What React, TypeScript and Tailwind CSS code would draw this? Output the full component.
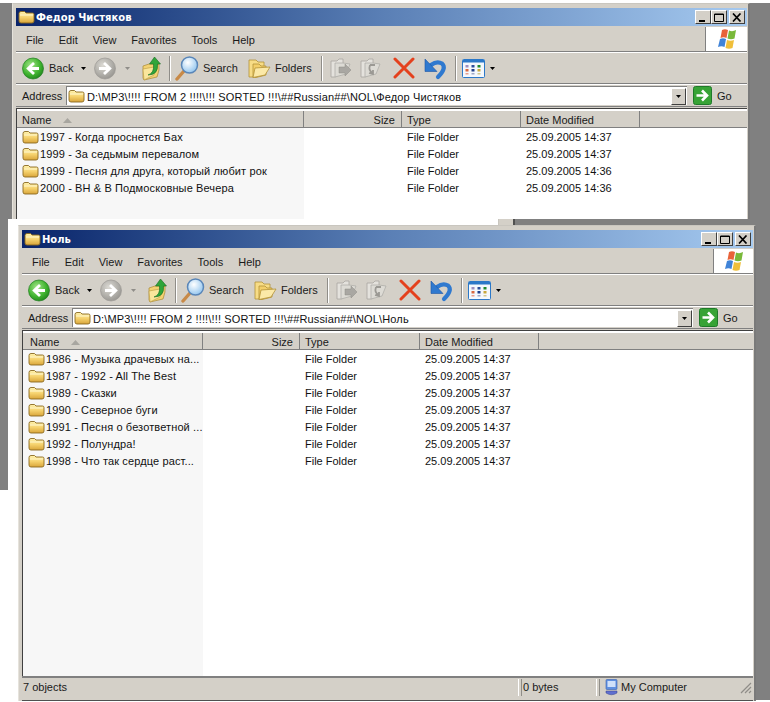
import React from "react";

const Folder = () => (
  <svg width="17" height="14" viewBox="0 0 17 14" className="shrink-0">
    <defs>
      <linearGradient id="fg" x1="0" y1="0" x2="0" y2="1">
        <stop offset="0" stopColor="#fff3b0" />
        <stop offset="0.5" stopColor="#f6d36f" />
        <stop offset="1" stopColor="#d9a53a" />
      </linearGradient>
    </defs>
    <path d="M1 3.5 Q1 1.5 3 1.5 H6.5 L8 3 H14.5 Q16 3 16 4.5 V11 Q16 13 14 13 H3 Q1 13 1 11 Z" fill="url(#fg)" stroke="#8a6a20" strokeWidth="0.9" />
    <path d="M2 5 H15" stroke="#fff8d0" strokeWidth="1" />
  </svg>
);

const Nav = ({ dir, on }: { dir: "l" | "r"; on: boolean }) => (
  <svg width="22" height="23" viewBox="0 0 22 23" className="shrink-0">
    <defs>
      <radialGradient id="navg" cx="0.4" cy="0.35" r="0.75">
        <stop offset="0" stopColor="#a4e58a" />
        <stop offset="0.6" stopColor="#3fb32e" />
        <stop offset="1" stopColor="#1b7a1a" />
      </radialGradient>
      <radialGradient id="navs" cx="0.4" cy="0.35" r="0.75">
        <stop offset="0" stopColor="#dcdad4" />
        <stop offset="1" stopColor="#918f8a" />
      </radialGradient>
    </defs>
    <circle cx="11" cy="11.5" r="10.5" fill={on ? "url(#navg)" : "url(#navs)"} stroke={on ? "#1d7d1d" : "#9c9a95"} strokeWidth="0.7" />
    <path
      d={dir === "l" ? "M17 11.5 H7 M12 6 L6.2 11.5 L12 17" : "M5 11.5 H15 M10 6 L15.8 11.5 L10 17"}
      fill="none"
      stroke="#fff"
      strokeWidth="2.8"
    />
  </svg>
);

const Caret = ({ c = "#000" }: { c?: string }) => (
  <svg width="5" height="3" viewBox="0 0 5 3" className="shrink-0">
    <path d="M0 0 H5 L2.5 3 Z" fill={c} />
  </svg>
);

const Up = () => (
  <svg width="19" height="25" viewBox="0 0 19 25" className="shrink-0">
    <path d="M1 10 L7 8 H17 V14 L15 21 L2 24 L1 22 Z" fill="#f3d272" stroke="#a98a35" strokeWidth="0.7" />
    <path d="M1 13 L12 11 V19 L2 24 Z" fill="#fae69c" stroke="#b8983f" strokeWidth="0.6" />
    <path d="M6 19 Q12.5 17 11.5 8 H7.5 L12.5 1 L18.5 8 H15.5 Q16.5 19 6 19 Z" fill="#2fa53a" stroke="#166b22" strokeWidth="0.6" />
  </svg>
);

const Search = () => (
  <svg width="24" height="25" viewBox="0 0 24 25" className="shrink-0">
    <defs>
      <radialGradient id="lens" cx="0.4" cy="0.35" r="0.7">
        <stop offset="0" stopColor="#ffffff" />
        <stop offset="1" stopColor="#8ec3ee" />
      </radialGradient>
    </defs>
    <path d="M2 23 L9 15" stroke="#c88a48" strokeWidth="3.4" strokeLinecap="round" />
    <circle cx="14.5" cy="9" r="8" fill="url(#lens)" stroke="#5a86b8" strokeWidth="1.5" />
  </svg>
);

const Folders = () => (
  <svg width="23" height="20" viewBox="0 0 23 20" className="shrink-0">
    <path d="M1 2 H8 L10 4 H16 V16 L6 19 H1 Z" fill="#f7dc86" stroke="#b39237" strokeWidth="0.8" />
    <path d="M5 6 H11 L13 8 H18 V17 L8 19.5 H5 Z" fill="#f3cf6a" stroke="#b39237" strokeWidth="0.8" />
    <path d="M7 10 L22 9 L17 17 L5 19.5 Z" fill="#fbe9a8" stroke="#b39237" strokeWidth="0.8" />
  </svg>
);

const GrayMove = ({ copy }: { copy?: boolean }) => (
  <svg width="22" height="21" viewBox="0 0 22 21" className="shrink-0">
    <path d="M1 3 H7 L9 1 H13 V15 L5 19 H1 Z" fill="#e4e2dd" stroke="#a8a6a1" strokeWidth="0.8" />
    <path d="M5 5 H13 L20 6 L16 16 L5 19 Z" fill="#dddbd5" stroke="#b0aea9" strokeWidth="0.8" />
    {copy ? (
      <path d="M10 7 H15 M10 7 Q8 13 13 15 M13 12 L13 16 L9 15" fill="none" stroke="#9b9994" strokeWidth="1.8" />
    ) : (
      <path d="M9 9 H15 V6 L21 12 L15 18 V15 H9 Z" fill="#a9a7a2" stroke="#8e8c87" strokeWidth="0.5" />
    )}
  </svg>
);

const Cross = () => (
  <svg width="22" height="22" viewBox="0 0 22 22" className="shrink-0">
    <path d="M2 2 L20 20 M20 2 L2 20" stroke="#e4411d" strokeWidth="3" strokeLinecap="round" />
  </svg>
);

const Undo = () => (
  <svg width="24" height="23" viewBox="0 0 24 23" className="shrink-0">
    <path d="M7 8 Q13 3.5 18 6.5 Q23 11 14 20" fill="none" stroke="#2f79cf" strokeWidth="4.2" strokeLinecap="round" />
    <path d="M1 2 L13 14.5 H1 Z" fill="#2f79cf" stroke="#1c55a4" strokeWidth="0.6" />
  </svg>
);

const Views = () => (
  <svg width="23" height="19" viewBox="0 0 23 19" className="shrink-0">
    <rect x="0.5" y="0.5" width="22" height="18" rx="1" fill="#f4f8fd" stroke="#2b78c8" />
    <rect x="1" y="1" width="21" height="2.5" fill="#2b78c8" />
    <rect x="3.5" y="6" width="3" height="2.5" fill="#9b8ec0" />
    <rect x="9.5" y="6" width="3" height="2.5" fill="#2b4f9b" />
    <rect x="15.5" y="6" width="3" height="2.5" fill="#1f8a2e" />
    <rect x="3.5" y="10" width="3" height="2.5" fill="#d9683f" />
    <rect x="9.5" y="10" width="3" height="2.5" fill="#1f3f8b" />
    <rect x="15.5" y="10" width="3" height="2.5" fill="#c8a83c" />
    <rect x="3.5" y="14" width="3" height="1.5" fill="#e8a090" />
    <rect x="9.5" y="14" width="3" height="1.5" fill="#a0a8c8" />
    <rect x="15.5" y="14" width="3" height="1.5" fill="#d0c890" />
  </svg>
);

const Flag = () => (
  <svg width="20" height="22" viewBox="0 0 20 22" className="shrink-0">
    <path d="M5 2 Q8 0.5 11 2 L9.5 10 Q6.5 8.5 3.5 10 Z" fill="#e8633a" />
    <path d="M12 2.5 Q15.5 4 19 2 L17.5 10.5 Q14 12 10.5 10.5 Z" fill="#79b93a" />
    <path d="M3 11 Q6 9.5 9 11 L7.5 19 Q4.5 17.5 1 19 Z" fill="#3f83d8" />
    <path d="M10 12 Q13.5 13.5 17 12 L15.5 20 Q12 21.5 8.5 20 Z" fill="#f0bf3a" />
  </svg>
);

const Go = () => (
  <svg width="19" height="19" viewBox="0 0 19 19" className="shrink-0">
    <rect x="0.5" y="0.5" width="18" height="18" rx="2" fill="#37a336" stroke="#1f7a2a" />
    <path d="M3.5 9.5 H13 M9 4.5 L14 9.5 L9 14.5" fill="none" stroke="#fff" strokeWidth="2.6" />
  </svg>
);

const Computer = () => (
  <svg width="13" height="17" viewBox="0 0 13 17" className="shrink-0">
    <rect x="1" y="0.5" width="11" height="10" rx="1" fill="#5f8fe0" stroke="#3860b0" strokeWidth="0.6" />
    <rect x="2.5" y="2" width="8" height="6" fill="#cfe0fa" />
    <path d="M1 12 H12 V14 Q6.5 17.5 1 14 Z" fill="#5f6fd0" stroke="#34408f" strokeWidth="0.5" />
  </svg>
);

const WinBtn = ({ kind }: { kind: "min" | "max" | "x" }) => (
  <div className="flex h-[14px] w-[16px] items-center justify-center border-t border-l border-r border-b border-t-white border-l-white border-r-[#404040] border-b-[#404040] bg-[#d4d0c8]">
    <svg width="10" height="9" viewBox="0 0 10 9">
      {kind === "min" && <rect x="1" y="7" width="6" height="2" fill="#000" />}
      {kind === "max" && <path d="M0.5 1 H9.5 V8.5 H0.5 Z M0.5 1.5 H9.5" fill="none" stroke="#000" strokeWidth="1" />}
      {kind === "x" && <path d="M1 0.5 L8.5 8.5 M8.5 0.5 L1 8.5" stroke="#000" strokeWidth="1.7" />}
    </svg>
  </div>
);

type Row = [string, string];
type WinProps = {
  title: string;
  path: string;
  rows: Row[];
  nameW: number;
  sizeW: number;
  typeW: number;
  dateW: number;
  nameInset: string;
  logoW: string;
  status?: boolean;
  pos: string;
};

const Sep = ({ ml }: { ml: string }) => (
  <div className={`h-[25px] w-[2px] shrink-0 border-l border-r border-l-[#8f8d88] border-r-white ${ml}`} />
);

function Win({ title, path, rows, nameW, sizeW, typeW, dateW, nameInset, logoW, status, pos }: WinProps) {
  const headCell = "flex h-full shrink-0 items-center border-r border-r-[#808080] pt-[2px]";
  return (
    <div className={`absolute flex w-[738px] flex-col overflow-hidden border-t border-l border-r-2 border-t-[#c9c6bf] border-l-[#e6e3dc] border-r-[#7a7a7a] bg-[#d4d0c8] pt-[4px] pr-[1px] pl-[3px] ${pos}`}>
      <div className="flex h-[18px] shrink-0 items-center bg-gradient-to-r from-[#0a246a] via-[#5a7fb5] to-[#a6caf0] pr-[2px]">
        <div className="ml-[2px] mr-[1px] flex"><Folder /></div>
        <span className="pt-[2px] font-['DejaVu_Sans'] text-[10px] font-bold text-white">{title}</span>
        <div className="ml-auto flex items-center">
          <WinBtn kind="min" />
          <WinBtn kind="max" />
          <div className="ml-[2px]"><WinBtn kind="x" /></div>
        </div>
      </div>

      <div className="mt-[1px] flex h-[25px] shrink-0 items-stretch border-b border-b-[#808080]">
        <div className="flex flex-1 items-center gap-[15px] pt-[2px] pl-[10px]">
          <span>File</span>
          <span>Edit</span>
          <span>View</span>
          <span>Favorites</span>
          <span>Tools</span>
          <span>Help</span>
        </div>
        <div className={`flex items-center justify-center border-l border-l-[#808080] bg-white ${logoW}`}>
          <Flag />
        </div>
      </div>

      <div className="flex h-[32px] shrink-0 items-center border-t border-b border-t-white border-b-[#808080] pl-[6px]">
        <Nav dir="l" on />
        <span className="ml-[5px] w-[22px] whitespace-nowrap">Back</span>
        <div className="ml-[10px]"><Caret /></div>
        <div className="ml-[8px]"><Nav dir="r" on={false} /></div>
        <div className="ml-[9px]"><Caret c="#8f8d88" /></div>
        <div className="ml-[12px]"><Up /></div>
        <Sep ml="ml-[8px]" />
        <div className="ml-[4px]"><Search /></div>
        <span className="ml-[4px] w-[33px] whitespace-nowrap">Search</span>
        <div className="ml-[12px]"><Folders /></div>
        <span className="ml-[4px] w-[35px] whitespace-nowrap">Folders</span>
        <Sep ml="ml-[11px]" />
        <div className="ml-[7px]"><GrayMove /></div>
        <div className="ml-[8px]"><GrayMove copy /></div>
        <div className="ml-[11px]"><Cross /></div>
        <div className="ml-[9px]"><Undo /></div>
        <Sep ml="ml-[7px]" />
        <div className="ml-[5px]"><Views /></div>
        <div className="ml-[5px]"><Caret /></div>
      </div>

      <div className="flex h-[23px] shrink-0 items-center border-t border-b border-t-white border-b-[#808080] pl-[6px]">
        <span className="w-[44px] shrink-0 pt-[2px]">Address</span>
        <div className="flex h-[19px] min-w-0 flex-1 items-center border-t border-l border-t-[#808080] border-l-[#808080] bg-white pl-[1px]">
          <Folder />
          <span className="ml-[2px] pt-[2px] tracking-[0.15px] text-[#111]">{path}</span>
          <div className="mr-[1px] ml-auto flex h-[17px] w-[15px] items-center justify-center border-t border-r border-b border-l border-t-white border-l-white border-r-[#404040] border-b-[#404040] bg-[#d4d0c8]">
            <Caret />
          </div>
        </div>
        <div className="ml-[6px] flex w-[54px] shrink-0 items-center">
          <Go />
          <span className="ml-[5px] pt-[2px]">Go</span>
        </div>
      </div>

      <div className="mt-[1px] flex min-h-0 flex-1 flex-col border-t border-l border-t-[#404040] border-l-[#404040] bg-white pt-[2px]">
        <div className="flex h-[17px] shrink-0 border-b border-b-[#808080] bg-[#d4d0c8]">
          <div className={headCell} style={{ width: nameW }}>
            <span className={nameInset}>Name</span>
            <svg width="9" height="5" viewBox="0 0 9 5" className="ml-[12px]"><path d="M4.5 0 L9 5 H0 Z" fill="#a8a6a0" /></svg>
          </div>
          <div className={`${headCell} justify-end pr-[6px]`} style={{ width: sizeW }}>Size</div>
          <div className={`${headCell} pl-[5px]`} style={{ width: typeW }}>Type</div>
          <div className={`${headCell} pl-[5px]`} style={{ width: dateW }}>Date Modified</div>
          <div className="flex-1" />
        </div>
        <div className="flex flex-1">
          <div className="shrink-0 bg-[#f7f7f7]" style={{ width: nameW }}>
            {rows.map((r) => (
              <div key={r[0]} className="flex h-[17px] items-center overflow-hidden whitespace-nowrap pl-[5px] text-[#111]">
                <Folder />
                <span className="ml-[1px] pt-[2px] tracking-[0.12px]">{r[0]}</span>
              </div>
            ))}
          </div>
          <div className="shrink-0" style={{ width: sizeW }} />
          <div className="shrink-0" style={{ width: typeW }}>
            {rows.map((r) => (
              <div key={r[0]} className="flex h-[17px] items-center pt-[2px] pl-[5px] text-[#111]">File Folder</div>
            ))}
          </div>
          <div className="shrink-0" style={{ width: dateW }}>
            {rows.map((r) => (
              <div key={r[0]} className="flex h-[17px] items-center pt-[2px] pl-[5px] text-[#111]">{r[1]}</div>
            ))}
          </div>
        </div>
      </div>

      {status && (
        <>
          <div className="flex h-[21px] shrink-0 items-stretch border-t-2 border-t-[#808080] py-[1px]">
            <div className="flex w-[497px] items-center border-r border-r-white pl-[1px]">7 objects</div>
            <div className="ml-[2px] flex w-[76px] items-center border-l border-r border-l-[#8f8d88] border-r-white pl-[1px]">0 bytes</div>
            <div className="ml-[2px] flex flex-1 items-center border-l border-l-[#8f8d88] pl-[5px]">
              <Computer />
              <span className="ml-[3px]">My Computer</span>
              <svg width="13" height="13" viewBox="0 0 13 13" className="mr-[1px] ml-auto">
                <path d="M12 2 L2 12 M12 6 L6 12 M12 10 L10 12" stroke="#8f8d88" strokeWidth="1.2" />
              </svg>
            </div>
          </div>
          <div className="h-[4px] shrink-0 border-b border-b-[#505050]" />
        </>
      )}
    </div>
  );
}

export default function App() {
  return (
    <div className="relative h-[702px] w-[770px] overflow-hidden bg-white font-['Liberation_Sans',sans-serif] text-[11px] leading-none text-[#1a1a1a]">
      <div className="absolute top-[3px] left-0 h-[487px] w-[8px] bg-[#808080]" />
      <div className="absolute top-[3px] left-0 h-[216px] w-[770px] bg-[#808080]" />
      <div className="absolute top-[219px] left-[515px] h-[481px] w-[255px] bg-[#808080]" />
      <div className="absolute top-[219px] left-[498px] h-[7px] w-[17px] border-r-2 border-l border-r-[#505050] border-l-[#c9c6bf] bg-[#d4d0c8]" />

      <Win
        pos="top-[3px] left-[12px] h-[216px]"
        title="Федор Чистяков"
        path="D:\MP3\!!!! FROM 2 !!!!\!!! SORTED !!!\##Russian##\NOL\Федор Чистяков"
        rows={[
          ["1997 - Когда проснется Бах", "25.09.2005 14:37"],
          ["1999 - За седьмым перевалом", "25.09.2005 14:37"],
          ["1999 - Песня для друга, который любит рок", "25.09.2005 14:36"],
          ["2000 - BH & B Подмосковные Вечера", "25.09.2005 14:36"],
        ]}
        nameW={287}
        sizeW={98}
        typeW={119}
        dateW={119}
        nameInset="pl-[5px]"
        logoW="w-[42px]"
      />
      <Win
        pos="top-[225px] left-[18px] h-[476px]"
        title="Ноль"
        path="D:\MP3\!!!! FROM 2 !!!!\!!! SORTED !!!\##Russian##\NOL\Ноль"
        rows={[
          ["1986 - Музыка драчевых на...", "25.09.2005 14:37"],
          ["1987 - 1992 - All The Best", "25.09.2005 14:37"],
          ["1989 - Сказки", "25.09.2005 14:37"],
          ["1990 - Северное буги", "25.09.2005 14:37"],
          ["1991 - Песня о безответной ...", "25.09.2005 14:37"],
          ["1992 - Полундра!", "25.09.2005 14:37"],
          ["1998 - Что так сердце раст...", "25.09.2005 14:37"],
        ]}
        nameW={180}
        sizeW={97}
        typeW={120}
        dateW={119}
        nameInset="pl-[7px]"
        logoW="w-[40px]"
        status
      />
    </div>
  );
}
